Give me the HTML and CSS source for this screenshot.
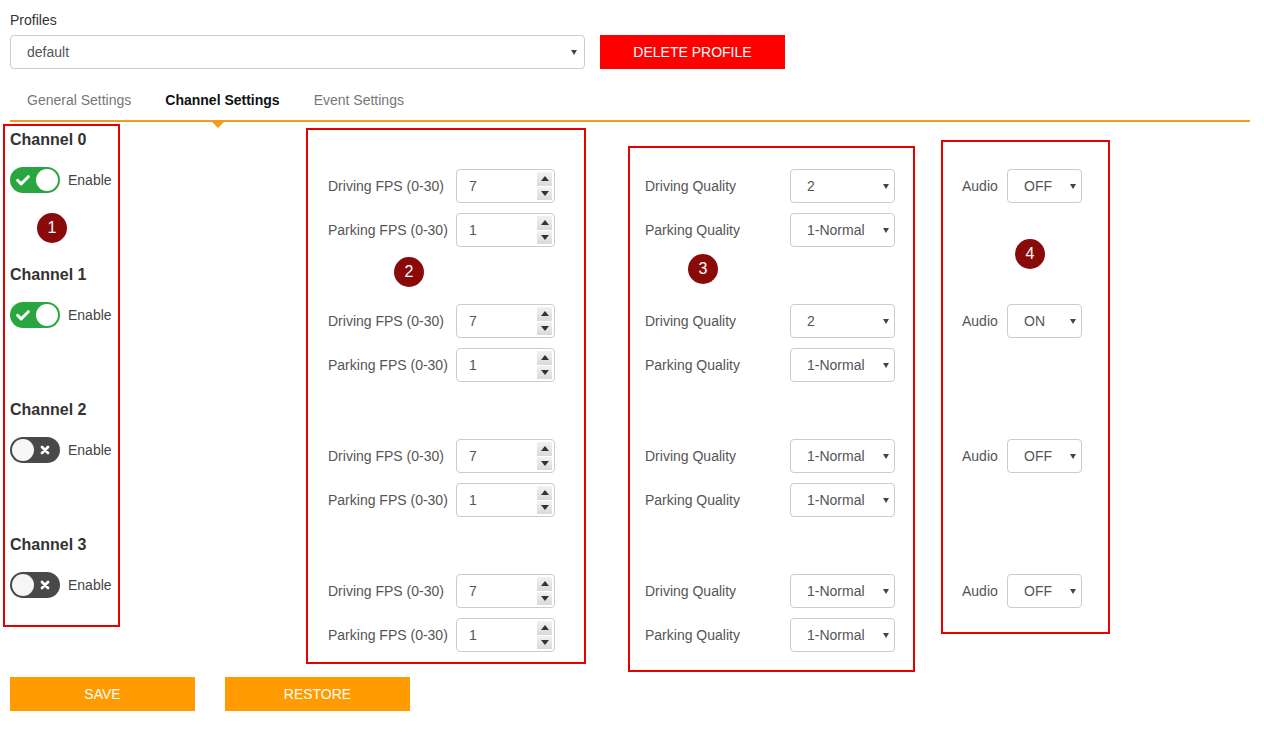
FILE: index.html
```html
<!DOCTYPE html>
<html lang="en">
<head>
<meta charset="utf-8">
<title>Channel Settings</title>
<link rel="stylesheet" href="styles.css">
</head>
<body>
<div class="page">
  <div class="profiles-label">Profiles</div>
  <div class="profile-row">
    <div class="select select-profile"><span>default</span></div>
    <button class="btn btn-delete">DELETE PROFILE</button>
  </div>

  <nav class="tabs">
    <a class="tab">General Settings</a>
    <a class="tab active">Channel Settings</a>
    <a class="tab">Event Settings</a>
  </nav>

  <div class="channels">
    <section class="channel">
      <h3 class="channel-title">Channel 0</h3>
      <div class="channel-fields">
        <div class="col-enable">
          <span class="switch on"><svg class="sw-icon" viewBox="0 0 12 12"><path d="M2 6.3l2.6 2.6L10 3.5"/></svg><span class="knob"></span></span>
          <span class="enable-text">Enable</span>
        </div>
        <div class="col-fps">
          <div class="field"><span class="field-label">Driving FPS (0-30)</span><div class="num"><span class="num-val">7</span><span class="spin"><span class="spin-up"></span><span class="spin-down"></span></span></div></div>
          <div class="field"><span class="field-label">Parking FPS (0-30)</span><div class="num"><span class="num-val">1</span><span class="spin"><span class="spin-up"></span><span class="spin-down"></span></span></div></div>
        </div>
        <div class="col-quality">
          <div class="field"><span class="field-label">Driving Quality</span><div class="select select-quality"><span>2</span></div></div>
          <div class="field"><span class="field-label">Parking Quality</span><div class="select select-quality"><span>1-Normal</span></div></div>
        </div>
        <div class="col-audio">
          <div class="field"><span class="field-label">Audio</span><div class="select select-audio"><span>OFF</span></div></div>
        </div>
      </div>
    </section>

    <section class="channel">
      <h3 class="channel-title">Channel 1</h3>
      <div class="channel-fields">
        <div class="col-enable">
          <span class="switch on"><svg class="sw-icon" viewBox="0 0 12 12"><path d="M2 6.3l2.6 2.6L10 3.5"/></svg><span class="knob"></span></span>
          <span class="enable-text">Enable</span>
        </div>
        <div class="col-fps">
          <div class="field"><span class="field-label">Driving FPS (0-30)</span><div class="num"><span class="num-val">7</span><span class="spin"><span class="spin-up"></span><span class="spin-down"></span></span></div></div>
          <div class="field"><span class="field-label">Parking FPS (0-30)</span><div class="num"><span class="num-val">1</span><span class="spin"><span class="spin-up"></span><span class="spin-down"></span></span></div></div>
        </div>
        <div class="col-quality">
          <div class="field"><span class="field-label">Driving Quality</span><div class="select select-quality"><span>2</span></div></div>
          <div class="field"><span class="field-label">Parking Quality</span><div class="select select-quality"><span>1-Normal</span></div></div>
        </div>
        <div class="col-audio">
          <div class="field"><span class="field-label">Audio</span><div class="select select-audio"><span>ON</span></div></div>
        </div>
      </div>
    </section>

    <section class="channel">
      <h3 class="channel-title">Channel 2</h3>
      <div class="channel-fields">
        <div class="col-enable">
          <span class="switch off"><span class="knob"></span><svg class="sw-icon" viewBox="0 0 12 12"><path d="M3 3l6 6M9 3l-6 6"/></svg></span>
          <span class="enable-text">Enable</span>
        </div>
        <div class="col-fps">
          <div class="field"><span class="field-label">Driving FPS (0-30)</span><div class="num"><span class="num-val">7</span><span class="spin"><span class="spin-up"></span><span class="spin-down"></span></span></div></div>
          <div class="field"><span class="field-label">Parking FPS (0-30)</span><div class="num"><span class="num-val">1</span><span class="spin"><span class="spin-up"></span><span class="spin-down"></span></span></div></div>
        </div>
        <div class="col-quality">
          <div class="field"><span class="field-label">Driving Quality</span><div class="select select-quality"><span>1-Normal</span></div></div>
          <div class="field"><span class="field-label">Parking Quality</span><div class="select select-quality"><span>1-Normal</span></div></div>
        </div>
        <div class="col-audio">
          <div class="field"><span class="field-label">Audio</span><div class="select select-audio"><span>OFF</span></div></div>
        </div>
      </div>
    </section>

    <section class="channel">
      <h3 class="channel-title">Channel 3</h3>
      <div class="channel-fields">
        <div class="col-enable">
          <span class="switch off"><span class="knob"></span><svg class="sw-icon" viewBox="0 0 12 12"><path d="M3 3l6 6M9 3l-6 6"/></svg></span>
          <span class="enable-text">Enable</span>
        </div>
        <div class="col-fps">
          <div class="field"><span class="field-label">Driving FPS (0-30)</span><div class="num"><span class="num-val">7</span><span class="spin"><span class="spin-up"></span><span class="spin-down"></span></span></div></div>
          <div class="field"><span class="field-label">Parking FPS (0-30)</span><div class="num"><span class="num-val">1</span><span class="spin"><span class="spin-up"></span><span class="spin-down"></span></span></div></div>
        </div>
        <div class="col-quality">
          <div class="field"><span class="field-label">Driving Quality</span><div class="select select-quality"><span>1-Normal</span></div></div>
          <div class="field"><span class="field-label">Parking Quality</span><div class="select select-quality"><span>1-Normal</span></div></div>
        </div>
        <div class="col-audio">
          <div class="field"><span class="field-label">Audio</span><div class="select select-audio"><span>OFF</span></div></div>
        </div>
      </div>
    </section>
  </div>

  <div class="actions">
    <button class="btn btn-orange">SAVE</button>
    <button class="btn btn-orange">RESTORE</button>
  </div>

  <div class="annot annot-1"></div>
  <div class="annot annot-2"></div>
  <div class="annot annot-3"></div>
  <div class="annot annot-4"></div>
  <div class="badge badge-1">1</div>
  <div class="badge badge-2">2</div>
  <div class="badge badge-3">3</div>
  <div class="badge badge-4">4</div>
</div>
</body>
</html>
```

FILE: styles.css
```css
html, body {
  margin: 0;
  padding: 0;
  background: #fff;
}

body {
  font-family: "Liberation Sans", Arial, sans-serif;
  font-size: 14px;
  color: #555;
}

.page {
  position: relative;
  padding: 10px 14px 0 10px;
  min-height: 725px;
}

.profiles-label {
  line-height: 20px;
  color: #333;
  margin-bottom: 5px;
}

.profile-row {
  display: flex;
  align-items: center;
  gap: 15px;
}

.select {
  position: relative;
  box-sizing: border-box;
  height: 34px;
  border: 1px solid #ccc;
  border-radius: 4px;
  display: flex;
  align-items: center;
  padding-left: 16px;
  color: #555;
  background: #fff;
}

.select::after {
  content: "";
  position: absolute;
  right: 5px;
  top: 50%;
  margin-top: -2px;
  border-left: 3.5px solid transparent;
  border-right: 3.5px solid transparent;
  border-top: 5px solid #444;
}

.select-profile {
  width: 575px;
}

.select-profile::after {
  right: 7px;
}

.btn {
  box-sizing: border-box;
  width: 185px;
  height: 34px;
  border: 0;
  color: #fff;
  font-family: inherit;
  font-size: 14px;
  padding: 0;
}

.btn-delete {
  background: #ff0000;
}

.btn-orange {
  background: #ff9a00;
}

.tabs {
  display: flex;
  margin-top: 12px;
  border-bottom: 2px solid #f29d1e;
}

.tab {
  position: relative;
  padding: 9px 17px 10px;
  line-height: 20px;
  color: #777;
}

.tab.active {
  color: #111;
  font-weight: bold;
}

.tab.active::after {
  content: "";
  position: absolute;
  left: 50%;
  margin-left: -10px;
  bottom: -8px;
  border-left: 6px solid transparent;
  border-right: 6px solid transparent;
  border-top: 6px solid #f29d1e;
}

.channels {
  margin-top: 8px;
}

.channel {
  margin-bottom: 18px;
}

.channel:last-child {
  margin-bottom: 0;
}

.channel-title {
  margin: 0 0 19px;
  font-size: 16px;
  font-weight: bold;
  line-height: 20px;
  color: #333;
}

.channel-fields {
  display: grid;
  grid-template-columns: 318px 317px 317px auto;
  align-items: start;
}

.col-enable {
  display: flex;
  align-items: center;
  gap: 8px;
  height: 26px;
  margin-top: -2px;
}

.enable-text {
  color: #444;
}

.switch {
  box-sizing: border-box;
  width: 50px;
  height: 26px;
  border-radius: 13px;
  display: flex;
  align-items: center;
  justify-content: space-between;
  padding: 0 2px;
}

.switch.on {
  background: #29a640;
  padding-left: 5px;
}

.switch.off {
  background: #494949;
  padding-right: 9px;
}

.knob {
  width: 22px;
  height: 22px;
  border-radius: 50%;
  background: #f6f6f6;
}

.switch.on .knob {
  background: #fff;
}

.sw-icon {
  width: 16px;
  height: 16px;
  fill: none;
  stroke: #fff;
  stroke-width: 2.2;
  stroke-linecap: round;
  stroke-linejoin: round;
}

.switch.off .sw-icon {
  width: 12px;
  height: 12px;
  stroke-width: 2.8;
}

.col-fps,
.col-quality {
  display: flex;
  flex-direction: column;
  gap: 10px;
}

.field {
  display: flex;
  align-items: center;
  height: 34px;
}

.field-label {
  color: #555;
  flex: none;
}

.col-fps .field-label {
  width: 128px;
}

.col-quality .field-label {
  width: 145px;
}

.col-audio .field-label {
  width: 45px;
}

.num {
  box-sizing: border-box;
  width: 99px;
  height: 34px;
  border: 1px solid #ccc;
  border-radius: 4px;
  display: flex;
  align-items: center;
  padding: 2px 2px 2px 12px;
}

.num-val {
  flex: 1;
  color: #555;
}

.spin {
  align-self: stretch;
  width: 15px;
  display: flex;
  flex-direction: column;
  gap: 1px;
}

.spin-up,
.spin-down {
  flex: 1;
  position: relative;
  background: linear-gradient(#f2f2f2, #d9d9d9);
}

.spin-up::after,
.spin-down::after {
  content: "";
  position: absolute;
  left: 50%;
  top: 50%;
  margin-left: -4px;
  border-left: 4px solid transparent;
  border-right: 4px solid transparent;
}

.spin-up::after {
  margin-top: -3px;
  border-bottom: 5px solid #333;
}

.spin-down::after {
  margin-top: -2px;
  border-top: 5px solid #333;
}

.select-quality {
  width: 105px;
}

.select-audio {
  width: 75px;
}

.actions {
  display: flex;
  gap: 30px;
  margin-top: 25px;
}

.annot {
  position: absolute;
  box-sizing: border-box;
  border: 2px solid #e60000;
}

.annot-1 {
  left: 3px;
  top: 124px;
  width: 117px;
  height: 503px;
}

.annot-2 {
  left: 306px;
  top: 128px;
  width: 280px;
  height: 536px;
}

.annot-3 {
  left: 628px;
  top: 146px;
  width: 287px;
  height: 526px;
}

.annot-4 {
  left: 941px;
  top: 140px;
  width: 169px;
  height: 494px;
}

.badge {
  position: absolute;
  width: 30px;
  height: 30px;
  border-radius: 50%;
  background: #8a0a0a;
  color: #fff;
  font-size: 16px;
  line-height: 30px;
  text-align: center;
}

.badge-1 {
  left: 37px;
  top: 213px;
}

.badge-2 {
  left: 394px;
  top: 257px;
}

.badge-3 {
  left: 688px;
  top: 254px;
}

.badge-4 {
  left: 1015px;
  top: 239px;
}
```
